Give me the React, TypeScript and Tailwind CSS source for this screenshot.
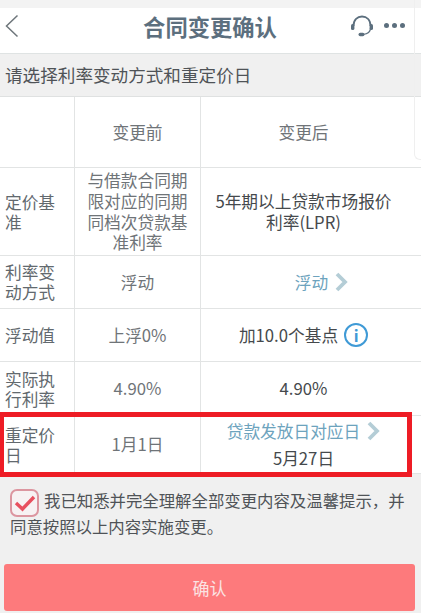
import type { ReactNode } from "react";

const font = { fontFamily: '"Noto Sans CJK SC", "Liberation Sans", sans-serif' };

function Row({
  label,
  before,
  after,
  height,
}: {
  label: ReactNode;
  before: ReactNode;
  after: ReactNode;
  height: string;
}) {
  return (
    <div className={`flex border-b border-[#e2e4e4] ${height}`}>
      <div className="flex w-[75px] shrink-0 items-center border-r border-[#e2e4e4] pl-[5px] pr-[3px] text-[16.7px] leading-[20px] text-[#62696e]">
        {label}
      </div>
      <div className="flex w-[126px] shrink-0 items-center justify-center border-r border-[#e2e4e4] px-[12px] text-center text-[16.7px] leading-[20.6px] text-[#6f7478]">
        {before}
      </div>
      <div className="flex flex-1 items-center justify-center pl-[12px] pr-[27px] text-center text-[16.7px] leading-[21px] text-[#45494c]">
        {after}
      </div>
    </div>
  );
}

function Arrow() {
  return (
    <svg width="14" height="20" viewBox="0 0 14 20" fill="none" stroke="#b4cdd6" strokeWidth="3.8">
      <path d="M3 2 L11 10 L3 18" />
    </svg>
  );
}

export default function App() {
  return (
    <div className="relative h-[613px] w-[421px] overflow-hidden bg-[#f0f0f0]" style={font}>
      {/* top bar */}
      <div className="h-[8px] bg-[#f3f3f3]" />
      <div className="flex h-[46px] items-center border-b border-[#dfe3e3] bg-white pb-[10px] pr-[16px]">
        <div className="w-[90px] pl-[5px]">
          <svg width="14" height="24" viewBox="0 0 14 24" fill="none" stroke="#6e767b" strokeWidth="1.5">
            <path d="M12.5 1.5 L1.5 12 L12.5 22.5" />
          </svg>
        </div>
        <span className="flex-1 text-center text-[22.3px] font-bold leading-[30px] text-[#5c6f7e]">
          合同变更确认
        </span>
        <div className="flex w-[75px] items-center justify-end gap-[10px]">
          <svg width="24" height="22" viewBox="0 0 24 22" fill="none" stroke="#5c6f7e" strokeWidth="1.8">
            <path d="M3.5 11 C3.5 4.5 7.5 1.5 12 1.5 C16.5 1.5 20.5 4.5 20.5 11" />
            <path d="M20.5 13 C20.5 17 17.5 19 13 19.5" strokeWidth="1.2" />
            <rect x="1" y="9" width="3.4" height="6" rx="1.6" fill="#5c6f7e" stroke="none" />
            <rect x="19.6" y="9" width="3.4" height="6" rx="1.6" fill="#5c6f7e" stroke="none" />
            <rect x="8.5" y="17.8" width="6" height="3.4" rx="1.7" fill="#5c6f7e" stroke="none" />
          </svg>
          <div className="flex gap-[3px]">
            <span className="h-[5px] w-[5px] rounded-full bg-[#5c6f7e]" />
            <span className="h-[5px] w-[5px] rounded-full bg-[#5c6f7e]" />
            <span className="h-[5px] w-[5px] rounded-full bg-[#5c6f7e]" />
          </div>
        </div>
      </div>

      {/* section title */}
      <div className="flex h-[43px] items-center border-b border-[#dfe1e1] pl-[5px] text-[17.6px] text-[#4f5357]">
        请选择利率变动方式和重定价日
      </div>

      {/* comparison table */}
      <div className="bg-white">
        <Row height="h-[71px]" label="" before="变更前" after={<span className="text-[#6f7478]">变更后</span>} />
        <Row
          height="h-[88px]"
          label="定价基准"
          before="与借款合同期限对应的同期同档次贷款基准利率"
          after="5年期以上贷款市场报价利率(LPR)"
        />
        <Row
          height="h-[53px]"
          label="利率变动方式"
          before="浮动"
          after={
            <span className="flex items-center gap-[6px] pl-[36px] text-[#6da3bd]">
              浮动
              <Arrow />
            </span>
          }
        />
        <Row
          height="h-[53px]"
          label="浮动值"
          before="上浮0%"
          after={
            <span className="flex items-center gap-[6px]">
              加10.0个基点
              <span className="flex h-[24px] w-[24px] items-center justify-center rounded-full border-2 border-[#3f9ad6] text-[16px] font-bold leading-none text-[#3f9ad6]">
                i
              </span>
            </span>
          }
        />
        <Row height="h-[54px]" label="实际执行利率" before="4.90%" after="4.90%" />
        <Row
          height="h-[58px]"
          label="重定价日"
          before="1月1日"
          after={
            <div className="flex flex-col items-center">
              <span className="flex items-center gap-[6px] leading-[27px] text-[#6da3bd]">
                贷款发放日对应日
                <Arrow />
              </span>
              <span className="leading-[27px]">5月27日</span>
            </div>
          }
        />
      </div>

      {/* agreement */}
      <div className="px-[10px] pt-[13px] text-[16.4px] leading-[26px] text-[#4f5357]">
        <span className="-my-[4px] mr-[5px] inline-flex h-[28px] w-[29px] items-center justify-center rounded-[7px] border-2 border-[#dc96a0] bg-[#f7f2f3] align-middle">
          <svg width="22" height="18" viewBox="0 0 22 18" fill="none" stroke="#e8505f" strokeWidth="3.4">
            <path d="M2 9 L8.5 15 L20 3" />
          </svg>
        </span>
        我已知悉并完全理解全部变更内容及温馨提示，并同意按照以上内容实施变更。
      </div>

      <div className="ml-[4px] mt-[25px] flex h-[47px] w-[411px] items-center justify-center rounded-[3px] bg-[#fd7a7c] text-[17px] text-[#fbe3e3]">
        确认
      </div>

      {/* faint edge of the layer behind the page */}
      <div className="absolute left-[414px] top-0 h-[160px] w-[7px] rounded-bl-[6px] border-b border-l border-[#efefef]" />
      {/* red highlight drawn over the screenshot */}
      <div className="absolute left-0 top-[412px] h-[65px] w-[412px] border-y-[5px] border-l-[4px] border-r-[5px] border-[#ee1c25]" />
    </div>
  );
}
